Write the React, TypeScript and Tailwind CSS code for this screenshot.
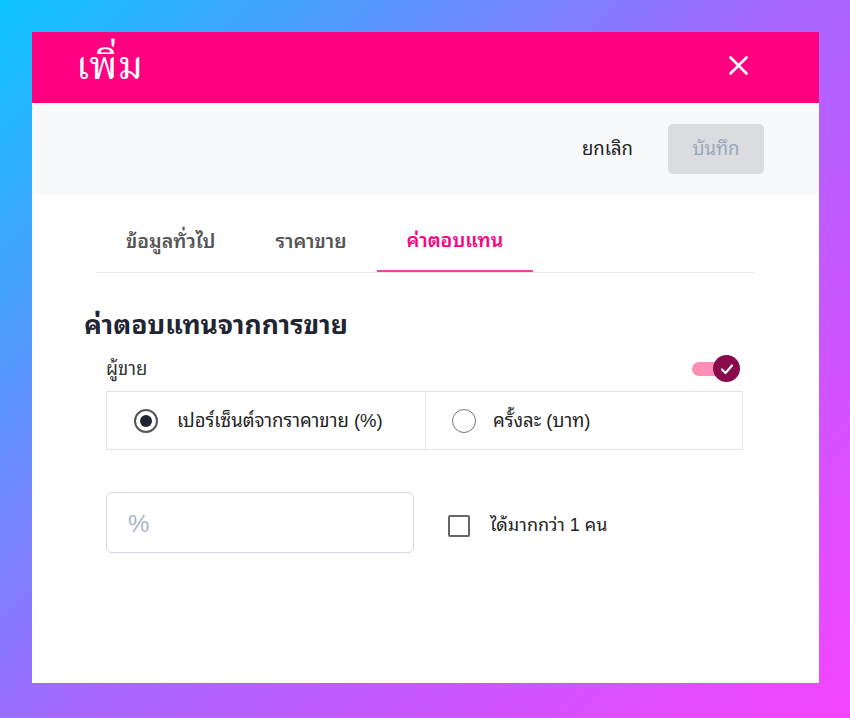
import React from "react";

const sans = "font-['Liberation_Sans','Noto_Sans_Thai_Looped','Loma','Garuda','Waree','Tlwg_Typo',sans-serif]";

export default function App() {
  return (
    <div className={`w-full h-[718px] bg-[linear-gradient(135deg,#0bc5ff_0%,#a667ff_50%,#f544ff_100%)] pt-[32px] pl-[32px] ${sans}`}>
      <div className="w-[787px] h-[651px] bg-white flex flex-col">
        {/* header */}
        <div className="h-[71px] bg-[#ff0080] flex items-center justify-between pl-[44px] pr-[71px]">
          <span className="text-white text-[39px] leading-none font-['Noto_Serif_Thai','Norasi','Kinnari','Liberation_Serif',serif] mt-[4px]">เพิ่ม</span>
          <svg width="19" height="19" viewBox="0 0 19 19" className="mt-[-4px]">
            <path d="M1.5 1.5 L17.5 17.5 M17.5 1.5 L1.5 17.5" stroke="white" strokeWidth="2.6" strokeLinecap="round" />
          </svg>
        </div>
        {/* actions */}
        <div className="h-[92px] bg-[#f8f9fb] flex items-center justify-end pr-[55px] gap-[35px]">
          <span className="text-[18.5px] leading-none text-[#222]">ยกเลิก</span>
          <div className="w-[96px] h-[50px] rounded-[5px] bg-[#dadcdf] flex items-center justify-center text-[18.5px] leading-none text-[#9aa6ba]">
            บันทึก
          </div>
        </div>
        {/* tabs */}
        <div className="mx-[64px] mt-[16px] flex border-b border-[#e5e9f0]">
          <div className="h-[61px] px-[30px] flex items-center text-[19.5px] font-semibold text-[#555]">ข้อมูลทั่วไป</div>
          <div className="h-[61px] px-[30px] flex items-center text-[19.5px] font-semibold text-[#555]">ราคาขาย</div>
          <div className="h-[61px] px-[30px] flex items-center text-[19.5px] font-semibold text-[#ff0080] border-b-2 border-[#ff3d9a] mb-[-1px]">ค่าตอบแทน</div>
        </div>
        {/* heading */}
        <div className="ml-[52px] mt-[37px] text-[26.5px] font-bold text-[#1f2533] leading-[30px]">ค่าตอบแทนจากการขาย</div>
        <div className="ml-[74px] mr-[76px]">
          <div className="mt-[14px] h-[30px] flex items-center justify-between">
            <span className="text-[18.5px] text-[#333]">ผู้ขาย</span>
            <div className="relative w-[48px] h-[28px] mr-[3px]">
              <div className="absolute left-0 top-[7px] w-[34px] h-[14px] rounded-full bg-[#ff8db5]" />
              <div className="absolute right-0 top-0 w-[27px] h-[27px] rounded-full bg-[#8a0b4c] flex items-center justify-center">
                <svg width="16" height="16" viewBox="0 0 16 16">
                  <path d="M3 8.5 L6.5 12 L13 4.5" stroke="white" strokeWidth="2.2" fill="none" strokeLinecap="round" strokeLinejoin="round" />
                </svg>
              </div>
            </div>
          </div>
          {/* radio group */}
          <div className="mt-[7px] h-[59px] border border-[#dfe3ea] flex">
            <div className="w-[319px] border-r border-[#dfe3ea] flex items-center pl-[27px] gap-[19px]">
              <div className="w-[24px] h-[24px] rounded-full border-2 border-[#555] flex items-center justify-center">
                <div className="w-[12px] h-[12px] rounded-full bg-[#1f2533]" />
              </div>
              <span className="text-[18.5px] text-[#222]">เปอร์เซ็นต์จากราคาขาย (%)</span>
            </div>
            <div className="flex-1 flex items-center pl-[26px] gap-[17px]">
              <div className="w-[24px] h-[24px] rounded-full border border-[#777]" />
              <span className="text-[18.5px] text-[#222]">ครั้งละ (บาท)</span>
            </div>
          </div>
          {/* input row */}
          <div className="mt-[42px] flex items-center">
            <div className="w-[308px] h-[61px] rounded-[6px] border border-[#cfd8e3] flex items-center pl-[21px]">
              <span className="text-[24px] text-[#aab4c5] mt-[2px]">%</span>
            </div>
            <div className="ml-[34px] mt-[6px] flex items-center">
              <div className="w-[22px] h-[22px] rounded-[2px] border-2 border-[#666]" />
              <span className="ml-[20px] text-[18px] text-[#222]">ได้มากกว่า 1 คน</span>
            </div>
          </div>
        </div>
      </div>
    </div>
  );
}
